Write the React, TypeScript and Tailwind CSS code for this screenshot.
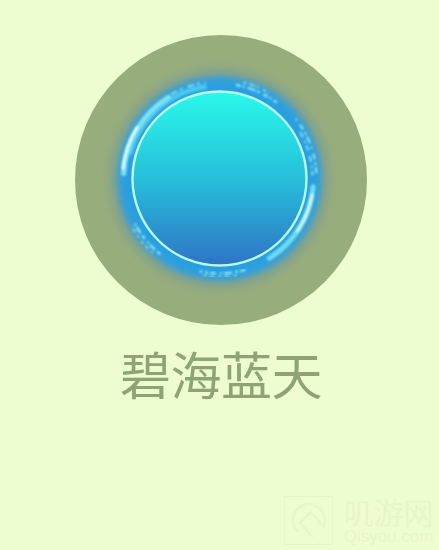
const cx = 144.5;
const cy = 143.5;

// arc between two angles, degrees clockwise from east
function arc(r: number, from: number, to: number) {
  const rad = (d: number) => (d * Math.PI) / 180;
  const x0 = cx + r * Math.cos(rad(from));
  const y0 = cy + r * Math.sin(rad(from));
  const x1 = cx + r * Math.cos(rad(to));
  const y1 = cy + r * Math.sin(rad(to));
  return `M${x0.toFixed(1)} ${y0.toFixed(1)}A${r} ${r} 0 0 1 ${x1.toFixed(1)} ${y1.toFixed(1)}`;
}

const sparkles = [
  { r: 95, from: 280, to: 307, dash: "5 2 2 3 8 2 3 4", w: 2.2 },
  { r: 99, from: 284, to: 300, dash: "3 3 6 2 2 5", w: 1.6 },
  { r: 97, from: 322, to: 357, dash: "2 5 6 3 3 2 7 4", w: 2 },
  { r: 93, from: 330, to: 358, dash: "6 4 2 3 5 6", w: 1.8 },
  { r: 96, from: 128, to: 154, dash: "4 3 7 2 2 4", w: 2.2 },
  { r: 100, from: 132, to: 150, dash: "2 4 4 3 3 5", w: 1.6 },
  { r: 95, from: 74, to: 102, dash: "6 2 3 3 8 2 2 4", w: 2.2 },
  { r: 98, from: 80, to: 100, dash: "3 4 5 3", w: 1.6 },
  { r: 97, from: 240, to: 262, dash: "7 3 3 5", w: 1.8 },
];

function Medallion() {
  return (
    <svg width="292" height="290" viewBox="0 0 292 290" className="block">
      <defs>
        <linearGradient id="disc" x1="0" y1="0" x2="0" y2="1">
          <stop offset="0" stopColor="#2af8ea" />
          <stop offset="0.5" stopColor="#27bfda" />
          <stop offset="1" stopColor="#2f74c4" />
        </linearGradient>
        <filter id="wide" x="-30%" y="-30%" width="160%" height="160%">
          <feGaussianBlur stdDeviation="5" />
        </filter>
        <filter id="soft" x="-30%" y="-30%" width="160%" height="160%">
          <feGaussianBlur stdDeviation="3.5" />
        </filter>
        <filter id="fine" x="-20%" y="-20%" width="140%" height="140%">
          <feGaussianBlur stdDeviation="0.9" />
        </filter>
      </defs>
      <ellipse cx="146" cy="145" rx="146" ry="145" fill="#98ad7c" />
      <circle cx={cx} cy={cy} r="111" fill="#86a38a" filter="url(#wide)" />
      <circle cx={cx} cy={cy} r="102" fill="#2a9fe0" filter="url(#soft)" />
      <path d={arc(93, 195, 262)} fill="none" stroke="#4cc7ee" strokeWidth="5" filter="url(#fine)" />
      <path d={arc(96, 183, 238)} fill="none" stroke="#7fe3f6" strokeWidth="5" strokeLinecap="round" filter="url(#fine)" />
      <path d={arc(97, 186, 212)} fill="none" stroke="#e6fffb" strokeWidth="2.5" strokeLinecap="round" filter="url(#fine)" />
      <path d={arc(94, 5, 58)} fill="none" stroke="#6fdcf3" strokeWidth="5" strokeLinecap="round" filter="url(#fine)" />
      <path d={arc(94, 10, 34)} fill="none" stroke="#dcfdfa" strokeWidth="2.5" strokeLinecap="round" filter="url(#fine)" />
      {sparkles.map((s) => (
        <path
          key={`${s.r}-${s.from}`}
          d={arc(s.r, s.from, s.to)}
          fill="none"
          stroke="#8fe8f7"
          strokeWidth={s.w}
          strokeDasharray={s.dash}
          filter="url(#fine)"
        />
      ))}
      <circle cx={cx} cy={cy} r="87" fill="url(#disc)" stroke="#b6fbea" strokeWidth="2.4" />
    </svg>
  );
}

function Watermark() {
  return (
    <div className="absolute left-[284px] top-[496px] flex gap-[8px] text-[#e6f6c8]">
      <div className="flex h-[49px] w-[49px] items-center justify-center border border-[#e6f6c8]">
        <svg width="40" height="40" viewBox="0 0 40 40" fill="none" stroke="currentColor" strokeWidth="2.5">
          <path d="M9 31A16 16 0 1 1 34 27" />
          <path d="M24 36L11 22L22 11L33 24" />
        </svg>
      </div>
      <div className="flex w-[95px] flex-col items-center">
        <span className="h-[33px] text-[30px] leading-[30px] font-['Noto_Sans_CJK_SC',sans-serif]">叽游网</span>
        <span className="text-[17px] leading-[16px] font-['Liberation_Sans',sans-serif]">Qisyou.com</span>
      </div>
    </div>
  );
}

export default function App() {
  return (
    <main className="relative flex h-[550px] w-[439px] flex-col items-center overflow-hidden bg-[#eefdcf] pt-[35px]">
      <div className="ml-[3px]">
        <Medallion />
      </div>
      <h1 className="mt-[18px] ml-[3px] text-[51px] leading-[60px] font-normal tracking-[-0.5px] text-[#8ea474] font-['Noto_Sans_CJK_SC',sans-serif]">
        碧海蓝天
      </h1>
      <Watermark />
    </main>
  );
}
